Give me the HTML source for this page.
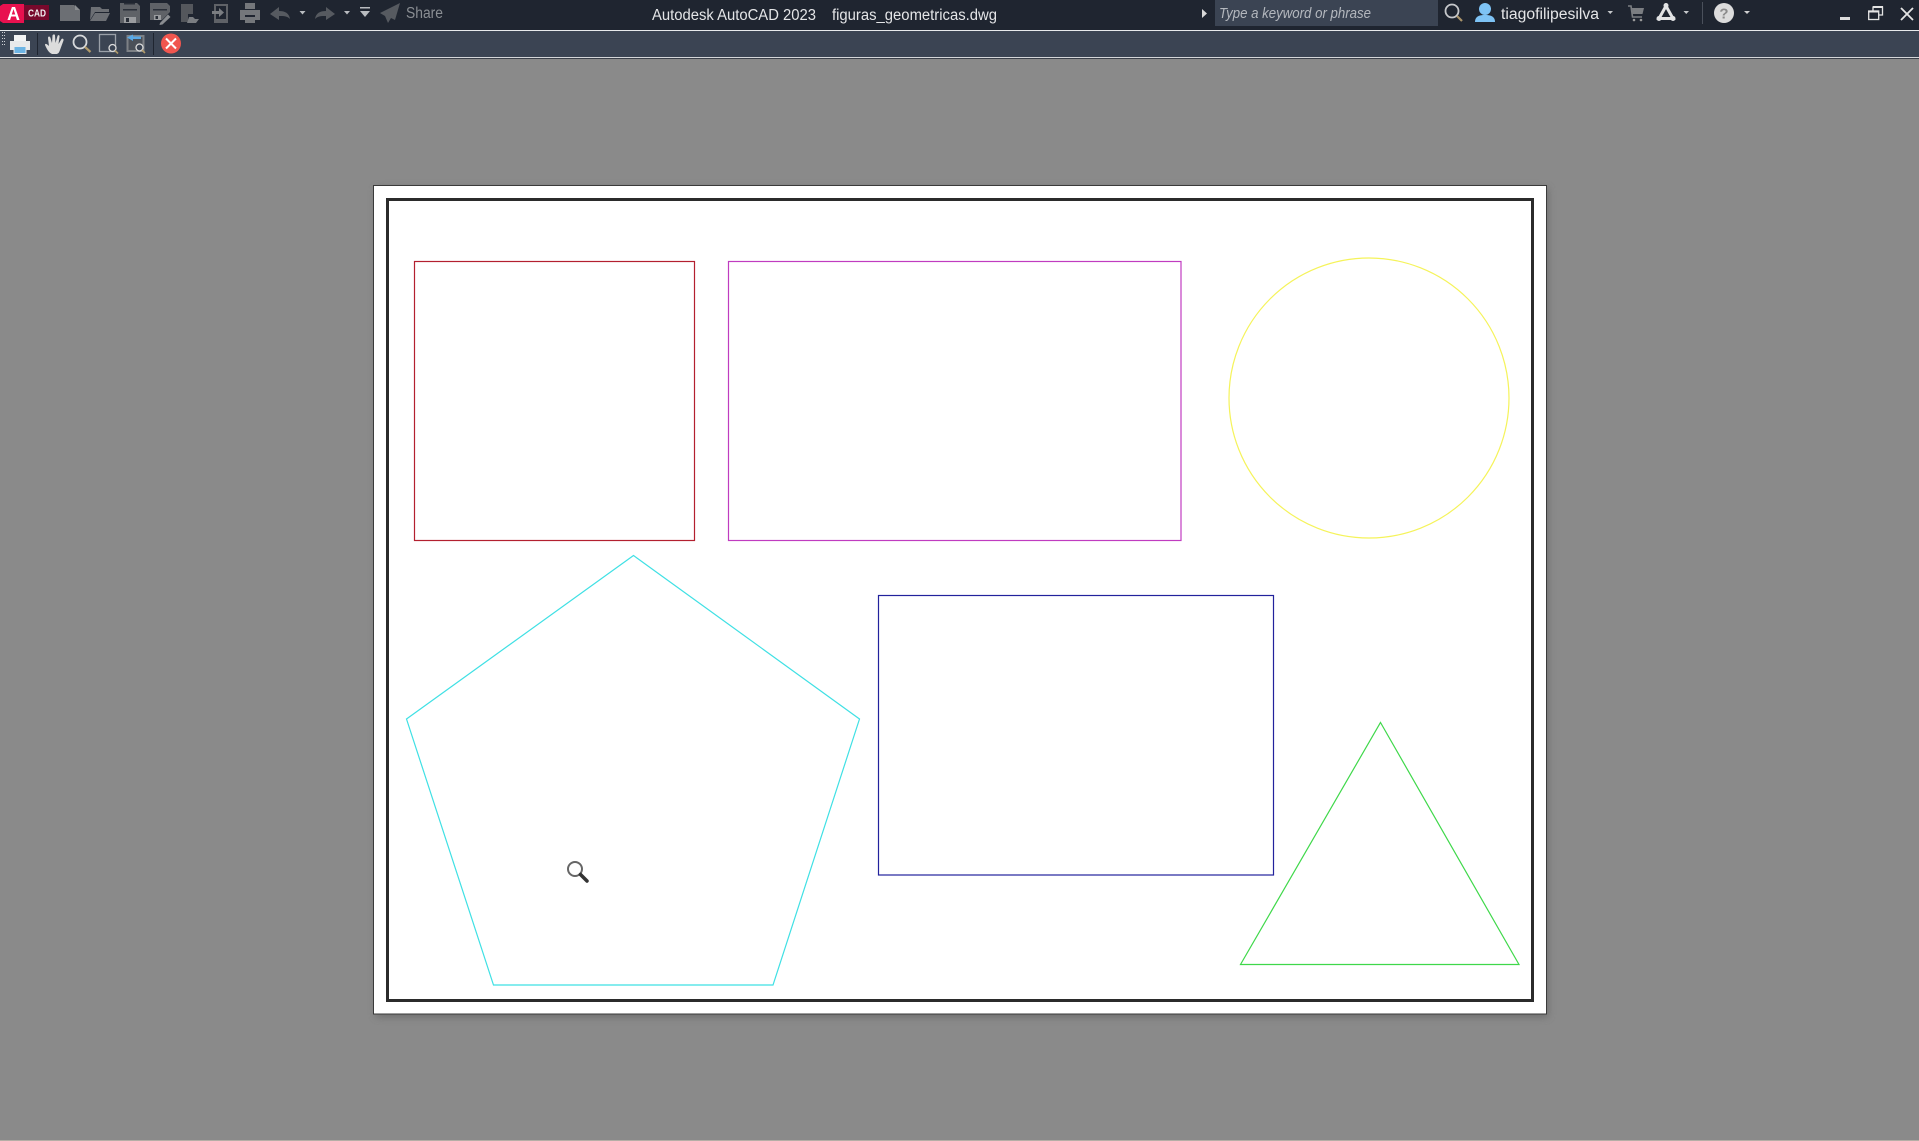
<!DOCTYPE html>
<html lang="en">
<head>
<meta charset="utf-8">
<title>Autodesk AutoCAD 2023</title>
<style>
html,body{margin:0;padding:0;width:1919px;height:1141px;overflow:hidden;background:#8a8a8a}
svg{display:block;position:absolute;left:0;top:0}
text{font-family:"Liberation Sans",sans-serif}
</style>
</head>
<body>
<svg width="1919" height="1141" viewBox="0 0 1919 1141" xmlns="http://www.w3.org/2000/svg">
<defs>
<filter id="sh" x="-5%" y="-5%" width="110%" height="110%"><feGaussianBlur stdDeviation="4"/></filter>
</defs>
<rect width="1919" height="1141" fill="#8a8a8a"/>
<rect x="0" y="1140" width="1919" height="1" fill="#b5aea6"/>

<!-- title bar -->
<rect width="1919" height="30" fill="#1f2530"/>
<rect y="30" width="1919" height="1" fill="#e8eaec"/>
<rect y="31" width="1919" height="26" fill="#3b4453"/>
<rect y="57" width="1919" height="1" fill="#d5d7da"/>
<rect y="58" width="1919" height="1" fill="#3a3f48"/>

<!-- logo -->
<path d="M0 6L3 4H24V23H3L0 21Z" fill="#e8114f"/>
<rect x="24" y="5" width="25" height="15" fill="#78092c"/>
<text x="13.500" y="20" font-size="18" font-weight="700" fill="#fff" text-anchor="middle">A</text>
<text x="37" y="16.500" font-size="10" font-weight="700" fill="#f2f2f2" text-anchor="middle" textLength="18" lengthAdjust="spacingAndGlyphs">CAD</text>

<!-- quick access -->
<g fill="#6c6f74">
<path d="M60 5H74L80 10V21H60Z"/>
<path d="M75 5L80 10H75Z" fill="#8a8d91"/>
<path d="M91 7H100L102 9H109V12H95L90 20Z"/>
<path d="M95 13H110L106 21H90Z"/>
<!-- save -->
<path d="M120 3H137L140 6V23H120Z" fill="#5f6267"/>
<rect x="124" y="3" width="11" height="1.500" fill="#2a2f38"/>
<rect x="123" y="9" width="14" height="1.500" fill="#2a2f38"/>
<rect x="124" y="17" width="12" height="6" fill="#9a9c9f"/>
<rect x="126" y="18" width="3" height="4" fill="#2a2f38"/>
<!-- save as -->
<path d="M150 3H167L170 6V12L162 20H150Z" fill="#5f6267"/>
<rect x="153" y="9" width="14" height="1.500" fill="#2a2f38"/>
<rect x="154" y="15" width="7" height="5" fill="#9a9c9f"/>
<rect x="155.500" y="16" width="2.500" height="3" fill="#2a2f38"/>
<path d="M160 23L168 14.500L170.500 17L162.500 24.500L159.500 25Z" fill="#8a8d91"/>
<!-- open from cloud -->
<path fill-rule="evenodd" d="M181 4H193V14H188V22H181Z" fill="#54575c"/>
<path d="M189 17H193L195 19H199L196 23H187Z" fill="#7a7d81"/>
<!-- import -->
<path fill-rule="evenodd" d="M214 4H228V23H214ZM216 6V19H226V6Z" fill="#5f6267"/>
<path d="M212 11H219V8L224 12.500L219 17V14H212Z" fill="#7a7d81"/>
<!-- print -->
<path d="M245 3H255V9H245ZM240 10H260V20H255V15H245V20H240Z" fill="#74777b"/>
<rect x="245" y="17" width="10" height="6" fill="#74777b"/>
</g>
<g fill="#565a60">
<path d="M270 14L279 7V11C285 11 289 13 290 19C287 16 284 16 279 16V20Z"/>
<path d="M335 14L326 7V11C320 11 316 13 315 19C318 16 321 16 326 16V20Z"/>
<path d="M400 3L380 13L385 16L388 23L391 18L395 20Z"/>
</g>
<g fill="#b9bcc0">
<path d="M299.500 11H305.500L302.500 14.500Z"/>
<path d="M344 11H350L347 14.500Z"/>
<rect x="360" y="7" width="10" height="1.500"/>
<path d="M360 11H370L365 17Z"/>
</g>
<text x="406" y="18" font-size="15.500" fill="#8a8e93" textLength="37" lengthAdjust="spacingAndGlyphs">Share</text>

<!-- title -->
<text x="652" y="20" font-size="15.500" fill="#e4e5e7" textLength="164" lengthAdjust="spacingAndGlyphs">Autodesk AutoCAD 2023</text>
<text x="832" y="20" font-size="15.500" fill="#e4e5e7" textLength="165" lengthAdjust="spacingAndGlyphs">figuras_geometricas.dwg</text>

<!-- right side -->
<path d="M1202 9L1207 13.500L1202 18Z" fill="#d8d8d8"/>
<rect x="1215" y="0" width="223" height="26" fill="#3b4453"/>
<text x="1219" y="18" font-size="14.500" font-style="italic" fill="#b4b8be" textLength="152" lengthAdjust="spacingAndGlyphs">Type a keyword or phrase</text>
<circle cx="1452" cy="11" r="6.500" fill="none" stroke="#c6c8cb" stroke-width="1.800"/>
<path d="M1457 16L1462 21" stroke="#a8936a" stroke-width="2.200"/>
<circle cx="1485" cy="9" r="6" fill="#7ec3f5"/>
<path d="M1475 22C1475 16 1480 15 1485 15C1490 15 1495 16 1495 22Z" fill="#7ec3f5"/>
<text x="1501" y="19" font-size="15.500" fill="#e4e5e7" textLength="98" lengthAdjust="spacingAndGlyphs">tiagofilipesilva</text>
<path d="M1607.500 11H1613L1610.250 14Z" fill="#c6c8cb"/>
<path d="M1628 6H1631L1632.500 17H1642" fill="none" stroke="#7b7e82" stroke-width="1.600"/>
<path d="M1632 8H1644L1642.500 14H1632.500Z" fill="#7b7e82"/>
<circle cx="1634" cy="20" r="1.300" fill="#9a9a9a"/><circle cx="1641" cy="20" r="1.300" fill="#9a9a9a"/>
<path d="M1666 6L1673 18.500H1659Z" fill="none" stroke="#e2e3e4" stroke-width="3"/>
<circle cx="1666" cy="5.500" r="2.500" fill="#e2e3e4"/><circle cx="1659" cy="18.500" r="2.500" fill="#e2e3e4"/><circle cx="1673" cy="18.500" r="2.500" fill="#e2e3e4"/>
<path d="M1683.500 11H1689L1686.250 14Z" fill="#c6c8cb"/>
<rect x="1702" y="2" width="1" height="22" fill="#4a505b"/>
<circle cx="1724" cy="13" r="10" fill="#dcdcdc"/>
<text x="1724" y="18.500" font-size="15" font-weight="700" fill="#8b8b8b" text-anchor="middle">?</text>
<path d="M1744 11H1750L1747 14Z" fill="#d0d0d0"/>
<rect x="1840" y="17" width="10" height="3" fill="#dcdcdc"/>
<path d="M1873 11V7H1882.500V15H1879" fill="none" stroke="#e4e4e4" stroke-width="1.300"/>
<rect x="1873" y="6" width="10" height="2" fill="#e4e4e4"/>
<rect x="1868.700" y="11" width="10" height="8.500" fill="#1f2530" stroke="#e4e4e4" stroke-width="1.300"/>
<rect x="1868" y="10.500" width="11" height="2" fill="#e4e4e4"/>
<path d="M1901 8L1913 20M1913 8L1901 20" stroke="#e4e4e4" stroke-width="1.800"/>

<!-- toolbar -->
<g fill="#cfd2d6">
<rect x="2" y="32" width="1" height="1"/><rect x="2" y="35" width="1" height="1"/><rect x="2" y="38" width="1" height="1"/><rect x="2" y="41" width="1" height="1"/><rect x="2" y="44" width="1" height="1"/>
<rect x="4" y="32" width="1" height="1"/><rect x="4" y="35" width="1" height="1"/><rect x="4" y="38" width="1" height="1"/><rect x="4" y="41" width="1" height="1"/><rect x="4" y="44" width="1" height="1"/>
</g>
<path d="M14 35H26V41H14Z" fill="#f2f3f4"/>
<path d="M10 41H30V50H26V47H14V50H10Z" fill="#e8e9eb"/>
<rect x="14" y="46.500" width="12" height="7" fill="#6db4e4" stroke="#e8e9eb"/>
<rect x="37" y="33" width="1" height="22" fill="#1f2530"/>
<path d="M52 54C48 52 47 49 45 45C45 43 47 44 49 46L48 38C48 36 50 36 50.500 38L52 43L52.500 35.500C53 34 55 34 55 35.500L55.500 43L57.500 36C58 34.500 60 35 59.500 37L58.500 44L61.500 39C62.500 38 64 39 63.500 40.500L60 50C59 53 58 54 56 54Z" fill="#dcdcdc"/>
<circle cx="80" cy="42" r="6.500" fill="none" stroke="#d8dadc" stroke-width="1.800"/>
<path d="M85 47L90.500 52" stroke="#b09a6a" stroke-width="2.200"/>
<rect x="99.500" y="34.500" width="16" height="17" fill="none" stroke="#9aa0a8" stroke-width="1.300"/>
<circle cx="112.500" cy="48" r="3.500" fill="#3b4453" stroke="#dcdcdc" stroke-width="1.300"/>
<path d="M115 50.500L118 53.500" stroke="#b09a6a" stroke-width="1.600"/>
<rect x="127.500" y="36" width="16" height="15" fill="#4a5059" stroke="#7d8186" stroke-width="2"/>
<path d="M127 37.500L133 34.500V36.500H141V39H133V41Z" fill="#5aa9e6"/>
<circle cx="139.500" cy="47.500" r="3.500" fill="#3b4453" stroke="#dcdcdc" stroke-width="1.300"/>
<path d="M142 50L145 53" stroke="#b09a6a" stroke-width="1.600"/>
<rect x="153" y="33" width="1" height="22" fill="#1f2530"/>
<circle cx="171" cy="43.500" r="10" fill="#f0564f"/>
<path d="M166 38.500L176 48.500M176 38.500L166 48.500" stroke="#fff" stroke-width="2"/>

<!-- paper -->
<rect x="376" y="188" width="1172" height="829" fill="#5a5a5a" filter="url(#sh)" opacity="0.6"/>
<rect x="373.500" y="185.500" width="1173" height="828.500" fill="#fff" stroke="#3a3a3a" stroke-width="1"/>
<rect x="387.500" y="199.500" width="1145" height="801" fill="none" stroke="#2b2b2b" stroke-width="3"/>

<!-- shapes -->
<g fill="none" stroke-width="1.200">
<rect x="414.500" y="261.500" width="280" height="279" stroke="#b3202f"/>
<rect x="728.500" y="261.500" width="452.500" height="279" stroke="#c03cc0"/>
<circle cx="1369" cy="398" r="140" stroke="#f5f35a"/>
<path d="M633.500 555.500L859.500 719L773 985H493.500L406.500 719Z" stroke="#3fe0e4"/>
<rect x="878.500" y="595.500" width="395" height="279.500" stroke="#22229c"/>
<path d="M1380.500 722.500L1519 964.500H1240.500Z" stroke="#3fd84a"/>
</g>

<!-- cursor -->
<circle cx="575" cy="869" r="7" fill="#fff" stroke="#666" stroke-width="2"/>
<path d="M580.500 874.500L587 881" stroke="#333" stroke-width="3.500" stroke-linecap="round"/>
</svg>
</body>
</html>
